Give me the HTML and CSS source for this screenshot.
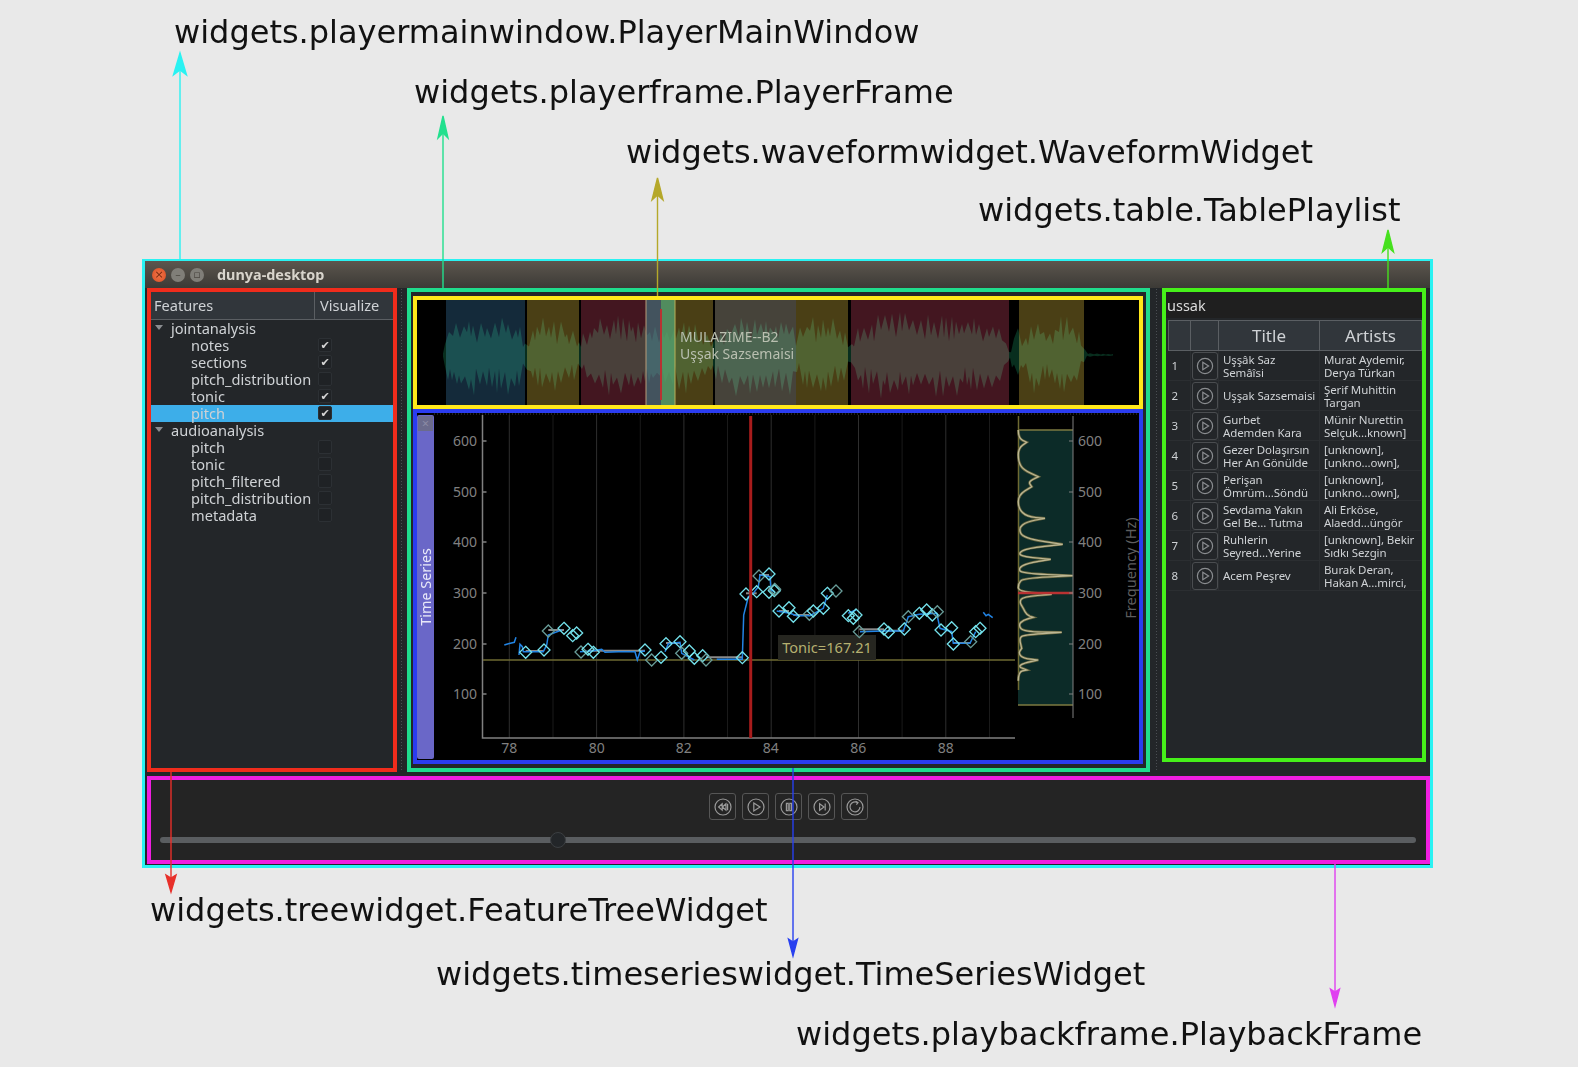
FILE: index.html
```html
<!DOCTYPE html>
<html lang="en">
<head>
  <meta charset="UTF-8">
  <title>dunya-desktop widgets</title>
  <link rel="stylesheet" href="styles.css">
</head>
<body>
  <div class="page">
    <div class="window">
      <div class="titlebar">
        <span class="wm-btn wm-close">×</span>
        <span class="wm-btn wm-min">–</span>
        <span class="wm-btn wm-max">▫</span>
        <span class="wm-title">dunya-desktop</span>
      </div>

      <div class="main">
        <section class="tree">
          <div class="tree-head">
            <div class="tree-head-name">Features</div>
            <div class="tree-head-vis">Visualize</div>
          </div>
          <div class="row parent"><span class="arrow"></span><span class="row-name">jointanalysis</span></div>
          <div class="row"><span class="row-name">notes</span><span class="check on"></span></div>
          <div class="row"><span class="row-name">sections</span><span class="check on"></span></div>
          <div class="row"><span class="row-name">pitch_distribution</span><span class="check"></span></div>
          <div class="row"><span class="row-name">tonic</span><span class="check on"></span></div>
          <div class="row selected"><span class="row-name">pitch</span><span class="check on"></span></div>
          <div class="row parent"><span class="arrow"></span><span class="row-name">audioanalysis</span></div>
          <div class="row"><span class="row-name">pitch</span><span class="check"></span></div>
          <div class="row"><span class="row-name">tonic</span><span class="check"></span></div>
          <div class="row"><span class="row-name">pitch_filtered</span><span class="check"></span></div>
          <div class="row"><span class="row-name">pitch_distribution</span><span class="check"></span></div>
          <div class="row"><span class="row-name">metadata</span><span class="check"></span></div>
        </section>

        <div class="splitter"></div>

        <section class="player">
          <div class="waveform">
            <svg class="waveform-svg" viewBox="417 300 722 105">
              <rect x="446" y="300" width="79" height="105" fill="#142a3a"/>
              <rect x="527" y="300" width="52" height="105" fill="#4a3f15"/>
              <rect x="581" y="300" width="65" height="105" fill="#431620"/>
              <rect x="675" y="300" width="38" height="105" fill="#4a3f15"/>
              <rect x="715" y="300" width="81" height="105" fill="#46433a"/>
              <rect x="796" y="300" width="52" height="105" fill="#4a3f15"/>
              <rect x="851" y="300" width="158" height="105" fill="#431620"/>
              <rect x="1019" y="300" width="65" height="105" fill="#4a3f15"/>
              <path id="wave" class="wave"/>
              <rect x="646" y="300" width="15" height="105" fill="#6f8b9c" opacity=".6"/>
              <rect x="661" y="300" width="14" height="105" fill="#5fa56f" opacity=".85"/>
              <path d="M646 300V405" stroke="#b89c78"/>
              <path d="M675 300V405" stroke="#b8b058"/>
              <rect x="660" y="309" width="2" height="91" fill="#b83232"/>
              <text class="wave-text" x="680" y="342">MULAZIME--B2</text>
              <text class="wave-text" x="680" y="359">Uşşak Sazsemaisi</text>
            </svg>
          </div>

          <div class="series">
            <div class="dock-title">
              <span class="dock-close">×</span>
              <span class="dock-label">Time Series</span>
            </div>
            <svg class="series-svg" viewBox="434 413 705 347">
              <path class="dots" d="M434 414H1139"/>
              <g id="grid"></g>
              <path class="axis" d="M482.5 415V738H1015"/>
              <path class="axis" d="M482.5 441h4M482.5 492h4M482.5 542h4M482.5 593h4M482.5 644h4M482.5 694h4"/>
              <g class="tick-y">
                <text x="477" y="446">600</text>
                <text x="477" y="497">500</text>
                <text x="477" y="547">400</text>
                <text x="477" y="598">300</text>
                <text x="477" y="649">200</text>
                <text x="477" y="699">100</text>
              </g>
              <g class="tick-x">
                <text x="509.3" y="753">78</text>
                <text x="596.7" y="753">80</text>
                <text x="683.7" y="753">82</text>
                <text x="770.7" y="753">84</text>
                <text x="858.3" y="753">86</text>
                <text x="945.7" y="753">88</text>
              </g>

              <rect x="1018" y="430" width="55" height="275" fill="#0c2b28"/>
              <path d="M1018 430H1073M1018 705H1073" stroke="#7c7a40" stroke-width="1.5"/>
              <path d="M1018.5 416V690" stroke="#6e6a32" stroke-width="1.5"/>
              <path class="distribution-edge" id="distributionEdge"/>
              <path class="distribution" id="distribution"/>
              <path d="M1018 593H1073" stroke="#b83232" stroke-width="2.5"/>
              <path d="M1073 416V718" stroke="#808080"/>
              <path d="M1069 441h4M1069 492h4M1069 542h4M1069 593h4M1069 644h4M1069 694h4" stroke="#808080"/>
              <g class="tick-r">
                <text x="1078" y="446">600</text>
                <text x="1078" y="497">500</text>
                <text x="1078" y="547">400</text>
                <text x="1078" y="598">300</text>
                <text x="1078" y="649">200</text>
                <text x="1078" y="699">100</text>
              </g>
              <text class="freq-label" transform="translate(1136 568) rotate(-90)">Frequency (Hz)</text>

              <path d="M483 660H1015" stroke="#6e6a32" stroke-width="1.5"/>
              <rect x="778" y="635" width="98" height="25" fill="#262620"/>
              <text class="tonic-text" x="827" y="653">Tonic=167.21</text>

              <g id="notes"></g>
              <rect x="749.2" y="416" width="3" height="322" fill="#a81c1c"/>
            </svg>
          </div>
        </section>

        <div class="splitter splitter-right"></div>

        <section class="playlist">
          <div class="search">ussak</div>
          <table class="tracks">
            <thead>
              <tr><th></th><th></th><th>Title</th><th>Artists</th></tr>
            </thead>
            <tbody>
              <tr><td class="num">1</td><td><span class="track-play"><svg viewBox="0 0 20 20"><circle cx="10" cy="10" r="7.6"/><path d="M7.8 6.3 13.6 10 7.8 13.7Z"/></svg></span></td><td>Uşşâk Saz<br>Semâîsi</td><td>Murat Aydemir,<br>Derya Türkan</td></tr>
              <tr><td class="num">2</td><td><span class="track-play"><svg viewBox="0 0 20 20"><circle cx="10" cy="10" r="7.6"/><path d="M7.8 6.3 13.6 10 7.8 13.7Z"/></svg></span></td><td>Uşşak Sazsemaisi</td><td>Şerif Muhittin<br>Targan</td></tr>
              <tr><td class="num">3</td><td><span class="track-play"><svg viewBox="0 0 20 20"><circle cx="10" cy="10" r="7.6"/><path d="M7.8 6.3 13.6 10 7.8 13.7Z"/></svg></span></td><td>Gurbet<br>Ademden Kara</td><td>Münir Nurettin<br>Selçuk…known]</td></tr>
              <tr><td class="num">4</td><td><span class="track-play"><svg viewBox="0 0 20 20"><circle cx="10" cy="10" r="7.6"/><path d="M7.8 6.3 13.6 10 7.8 13.7Z"/></svg></span></td><td>Gezer Dolaşırsın<br>Her An Gönülde</td><td>[unknown],<br>[unkno…own],</td></tr>
              <tr><td class="num">5</td><td><span class="track-play"><svg viewBox="0 0 20 20"><circle cx="10" cy="10" r="7.6"/><path d="M7.8 6.3 13.6 10 7.8 13.7Z"/></svg></span></td><td>Perişan<br>Ömrüm…Söndü</td><td>[unknown],<br>[unkno…own],</td></tr>
              <tr><td class="num">6</td><td><span class="track-play"><svg viewBox="0 0 20 20"><circle cx="10" cy="10" r="7.6"/><path d="M7.8 6.3 13.6 10 7.8 13.7Z"/></svg></span></td><td>Sevdama Yakın<br>Gel Be… Tutma</td><td>Ali Erköse,<br>Alaedd…üngör</td></tr>
              <tr><td class="num">7</td><td><span class="track-play"><svg viewBox="0 0 20 20"><circle cx="10" cy="10" r="7.6"/><path d="M7.8 6.3 13.6 10 7.8 13.7Z"/></svg></span></td><td>Ruhlerin<br>Seyred…Yerine</td><td>[unknown], Bekir<br>Sıdkı Sezgin</td></tr>
              <tr><td class="num">8</td><td><span class="track-play"><svg viewBox="0 0 20 20"><circle cx="10" cy="10" r="7.6"/><path d="M7.8 6.3 13.6 10 7.8 13.7Z"/></svg></span></td><td>Acem Peşrev</td><td>Burak Deran,<br>Hakan A…mirci,</td></tr>
            </tbody>
          </table>
        </section>
      </div>

      <section class="playback">
        <div class="transport">
          <button class="transport-btn"><svg viewBox="0 0 20 20"><circle cx="10" cy="10" r="8"/><path d="M9.2 6.8 5.6 10l3.6 3.2ZM13 6.8 9.4 10l3.6 3.2Z"/><path d="M14.6 6.8v6.4"/></svg></button>
          <button class="transport-btn"><svg viewBox="0 0 20 20"><circle cx="10" cy="10" r="8"/><path d="M7.8 6 14 10l-6.2 4Z"/></svg></button>
          <button class="transport-btn"><svg viewBox="0 0 20 20"><circle cx="10" cy="10" r="8"/><path d="M7.4 6.4v7.2h1.8V6.4ZM10.8 6.4v7.2h1.8V6.4Z"/></svg></button>
          <button class="transport-btn"><svg viewBox="0 0 20 20"><circle cx="10" cy="10" r="8"/><path d="M7.6 6.8 12 10l-4.4 3.2Z"/><path d="M13.2 6.4v7.2"/></svg></button>
          <button class="transport-btn"><svg viewBox="0 0 20 20"><circle cx="10" cy="10" r="8"/><path d="M12.6 5.6A5 5 0 1 0 15 10"/><path d="M10.6 4.2 13 5.6l-1.6 2"/></svg></button>
        </div>
        <div class="slider"><span class="slider-handle"></span></div>
      </section>
    </div>

    <div class="label label-main">widgets.playermainwindow.PlayerMainWindow</div>
    <div class="label label-frame">widgets.playerframe.PlayerFrame</div>
    <div class="label label-wave">widgets.waveformwidget.WaveformWidget</div>
    <div class="label label-table">widgets.table.TablePlaylist</div>
    <div class="label label-tree">widgets.treewidget.FeatureTreeWidget</div>
    <div class="label label-series">widgets.timeserieswidget.TimeSeriesWidget</div>
    <div class="label label-playback">widgets.playbackframe.PlaybackFrame</div>

    <svg class="arrows" viewBox="0 0 1578 1067">
      <g stroke="#2af2f2" fill="#2af2f2"><path d="M180 261V68"/><path d="M180 53l6.5 22-6.5-5-6.5 5Z"/></g>
      <g stroke="#22e08e" fill="#22e08e"><path d="M443 288V131"/><path d="M443 116l5 22-5-5-5 5Z"/></g>
      <g stroke="#b5a82a" fill="#b5a82a"><path d="M657.5 296V193"/><path d="M657.5 178l5.5 22-5.5-5-5.5 5Z"/></g>
      <g stroke="#46e01e" fill="#46e01e"><path d="M1388 288V245"/><path d="M1388 230l5.5 22-5.5-5-5.5 5Z"/></g>
      <g stroke="#e8302a" fill="#e8302a"><path d="M171 772V877"/><path d="M171 892l-5-17 5 3 5-3Z"/></g>
      <g stroke="#2840f0" fill="#2840f0"><path d="M793 768V941"/><path d="M793 956l-4.5-17 4.5 3 4.5-3Z"/></g>
      <g stroke="#e040f0" fill="#e040f0"><path d="M1335 864V991"/><path d="M1335 1006l-4.5-17 4.5 3 4.5-3Z"/></g>
    </svg>
  </div>

  <script src="plot.js"></script>
</body>
</html>
```

FILE: styles.css
```css
body {
  margin: 0;
  background-color: #e9e9e9;
  font-family: "Noto Sans", sans-serif;
}

.page {
  position: relative;
  width: 1578px;
  height: 1067px;
  padding: 259px 0 0 142px;
  box-sizing: border-box;
  overflow: hidden;
}

/* annotation labels and arrows sit on the free canvas around the window */
.label {
  position: absolute;
  font-family: "DejaVu Sans", sans-serif;
  font-size: 32px;
  line-height: 38px;
  color: #111;
  white-space: nowrap;
}

.label-main { left: 174px; top: 13px; }
.label-frame { left: 414px; top: 73px; }
.label-wave { left: 626px; top: 133px; }
.label-table { left: 978px; top: 191px; }
.label-tree { left: 150px; top: 891px; }
.label-series { left: 436px; top: 955px; }
.label-playback { left: 796px; top: 1015px; }

.arrows {
  position: absolute;
  left: 0;
  top: 0;
  width: 1578px;
  height: 1067px;
  pointer-events: none;
}

.arrows path {
  stroke-width: 1.4;
}

.window {
  width: 1291px;
  height: 609px;
  box-sizing: border-box;
  border: 3px solid #2af2f2;
  border-top-width: 2px;
  background-color: #232629;
  display: flex;
  flex-direction: column;
}

.titlebar {
  height: 27px;
  display: flex;
  align-items: center;
  padding-left: 7px;
  gap: 5px;
  background: linear-gradient(#5c564e, #3c3a36);
}

.wm-btn {
  width: 14px;
  height: 14px;
  border-radius: 50%;
  font-size: 11px;
  line-height: 14px;
  text-align: center;
  color: #4a4640;
  background-color: #807e78;
  font-family: "DejaVu Sans", sans-serif;
}

.wm-close {
  color: #7a2a10;
  background: radial-gradient(#f0764a, #dc4c22);
}

.wm-title {
  margin-left: 8px;
  font-size: 14.4px;
  font-weight: 700;
  color: #d8d4cc;
}

.main {
  display: flex;
  height: 484px;
  padding-left: 2px;
}

.tree {
  width: 250px;
  box-sizing: border-box;
  border: 4px solid #f02c1c;
  background-color: #232629;
  color: #cfd2d5;
  font-size: 14.6px;
}

.tree-head {
  display: flex;
  height: 28px;
  box-sizing: border-box;
  background-color: #31363b;
  border-bottom: 1px solid #5b5f63;
  line-height: 27px;
}

.tree-head-name {
  width: 164px;
  padding-left: 3px;
  box-sizing: border-box;
  border-right: 1px solid #5b5f63;
}

.tree-head-vis {
  padding-left: 5px;
}

.row {
  display: flex;
  align-items: center;
  height: 17px;
  padding-left: 40px;
  position: relative;
  line-height: 17px;
}

.row.parent {
  padding-left: 20px;
}

.row.selected {
  background-color: #3daee9;
}

.arrow {
  position: absolute;
  left: 4px;
  top: 5px;
  border: 4px solid transparent;
  border-top: 5px solid #8a8d90;
  border-bottom: 0;
}

.check {
  position: absolute;
  left: 167px;
  top: 1px;
  width: 14px;
  height: 14px;
  box-sizing: border-box;
  border: 1px solid #2c3034;
  border-radius: 2px;
  background-color: #1f2225;
  font-size: 11px;
  line-height: 12px;
  text-align: center;
  color: #d4d4d4;
}

.check.on::after {
  content: "\2714";
  font-family: "DejaVu Sans", sans-serif;
}

.splitter {
  width: 10px;
  background-image: radial-gradient(#4a4e52 1px, transparent 1px);
  background-size: 3px 3px;
  background-position: 3px 0;
  background-repeat: repeat-y;
}

.splitter-right {
  width: 12px;
  background-position: 5px 0;
}

.player {
  width: 743px;
  box-sizing: border-box;
  border: 4px solid #1fdc8c;
  padding: 4px 3px 4px 2px;
  display: flex;
  flex-direction: column;
}

.waveform {
  height: 113px;
  box-sizing: border-box;
  border: 4px solid #ffe81a;
  background-color: #000;
}

.waveform-svg,
.series-svg {
  display: block;
  width: 100%;
  height: 100%;
}

.wave {
  fill: #082e1e;
  mix-blend-mode: screen;
}

.wave-text {
  font-size: 14px;
  fill: #b9bfb0;
}

.series {
  flex: 1;
  min-height: 0;
  box-sizing: border-box;
  border: 4px solid #2a3cf0;
  background-color: #000;
  display: flex;
}

.dock-title {
  width: 17px;
  margin: 2px 0 1px;
  flex: none;
  background-color: #6a67c8;
  border-radius: 2px;
  display: flex;
  flex-direction: column;
  align-items: center;
  color: #e8e8f8;
}

.dock-close {
  width: 15px;
  height: 15px;
  margin-top: 1px;
  background-color: #6b6b8c;
  color: #8a8aa4;
  font-size: 13px;
  line-height: 15px;
  text-align: center;
}

.dock-label {
  margin-top: 117px;
  writing-mode: vertical-rl;
  transform: rotate(180deg);
  font-size: 14.4px;
  line-height: 17px;
}

.series-svg {
  flex: 1;
  min-width: 0;
  width: auto;
}

.dots {
  stroke: #444;
  stroke-dasharray: 1 2;
}

.axis {
  fill: none;
  stroke: #808080;
  stroke-width: 1.5;
}

.tick-y text,
.tick-x text,
.tick-r text {
  font-size: 14px;
  fill: #808080;
}

.tick-y text { text-anchor: end; }
.tick-x text { text-anchor: middle; }

.freq-label {
  font-size: 14.6px;
  fill: #5e5e5e;
  text-anchor: middle;
}

.tonic-text {
  font-size: 14.6px;
  fill: #b5b070;
  text-anchor: middle;
}

.distribution-edge {
  fill: none;
  stroke: #6a6840;
  stroke-width: 2.6;
}

.distribution {
  fill: none;
  stroke: #bdb794;
  stroke-width: 1.2;
}

.playlist {
  width: 264px;
  box-sizing: border-box;
  height: 474px;
  border: 4px solid #46f01a;
  color: #cfd2d5;
  font-size: 11.5px;
  letter-spacing: -0.1px;
}

.search {
  height: 26px;
  padding-left: 1px;
  background-color: #1f1f1f;
  color: #dcdcdc;
  font-size: 14.5px;
  letter-spacing: 0;
  line-height: 26px;
}

.tracks {
  width: 254px;
  margin: 2px 0 0 2px;
  table-layout: fixed;
  border-collapse: collapse;
}

.tracks th {
  height: 30px;
  padding: 0;
  box-sizing: border-box;
  background-color: #31363b;
  border: 1px solid #5b5f63;
  font-size: 17px;
  font-weight: 400;
  letter-spacing: 0;
}

.tracks th:nth-child(1) { width: 22px; }
.tracks th:nth-child(2) { width: 28px; }
.tracks th:nth-child(3) { width: 101px; }

.tracks td {
  height: 30px;
  padding: 0 0 0 4px;
  border-bottom: 1px solid #2b2e31;
  border-right: 1px solid #2b2e31;
  line-height: 13px;
  white-space: nowrap;
  box-sizing: border-box;
}

.tracks td.num {
  padding-left: 3px;
}

.tracks td:nth-child(2) {
  padding: 0 0 0 1px;
}

.track-play {
  display: block;
  width: 26px;
  height: 28px;
  box-sizing: border-box;
  border: 1px solid #4a4d50;
  border-radius: 3px;
}

.track-play svg {
  display: block;
  width: 20px;
  height: 20px;
  margin: 3px 2px;
  fill: none;
  stroke: #8a8d90;
  stroke-width: 1.2;
}

.playback {
  margin: 4px 0 0 2px;
  height: 88px;
  box-sizing: border-box;
  border: 4px solid #f01ee0;
  background-color: #242424;
  display: flex;
  flex-direction: column;
  align-items: center;
}

.transport {
  display: flex;
  gap: 6px;
  margin-top: 13px;
}

.transport-btn {
  width: 27px;
  height: 27px;
  padding: 0;
  background: none;
  border: 1px solid #565656;
  border-radius: 3px;
}

.transport-btn svg {
  display: block;
  width: 20px;
  height: 20px;
  margin: 0 auto;
  fill: none;
  stroke: #9a9a9a;
  stroke-width: 1.2;
}

.slider {
  position: relative;
  align-self: flex-start;
  width: 1256px;
  height: 6px;
  margin: 17px 0 0 9px;
  border-radius: 3px;
  background-color: #5a5d60;
}

.slider-handle {
  position: absolute;
  left: 390px;
  top: -5px;
  width: 16px;
  height: 16px;
  box-sizing: border-box;
  border-radius: 50%;
  border: 1px solid #3c3f42;
  background-color: #232629;
}

.grid-major { stroke: #2e2e2e; }
.grid-minor { stroke: #1a1a1a; }

.note-bar {
  stroke: #8a8a8a;
  stroke-width: 2;
}

.pitch-line {
  fill: none;
  stroke: #2284e4;
  stroke-width: 1.5;
}

.diamond {
  fill: none;
  stroke: #74e2ec;
  stroke-width: 1.3;
}

.diamond.dim {
  stroke: #689c98;
}
```

FILE: plot.js
```js
// waveform, note contour and pitch distribution for the two plots
const svgNS = "http://www.w3.org/2000/svg";

function add(parent, tag, attrs) {
  const el = document.createElementNS(svgNS, tag);
  for (const key in attrs) el.setAttribute(key, attrs[key]);
  parent.appendChild(el);
  return el;
}

// seeded so every load draws the same picture
let seed = 17;
function rand() {
  seed = (seed * 16807) % 2147483647;
  return seed / 2147483647;
}

const envelope = [
  [443, 2], [446, 30], [452, 36], [470, 42], [490, 38], [510, 42], [522, 30], [526, 12],
  [530, 30], [545, 42], [560, 34], [575, 25], [580, 10], [585, 30], [600, 42], [625, 44],
  [645, 35], [660, 30], [675, 35], [690, 42], [712, 15], [716, 25], [735, 42], [760, 38],
  [790, 42], [796, 22], [810, 42], [830, 40], [846, 25], [850, 5], [856, 34], [880, 44],
  [950, 42], [1000, 36], [1007, 8], [1011, 4], [1014, 30], [1018, 28], [1024, 12], [1035, 42],
  [1050, 25], [1060, 44], [1075, 36], [1084, 10], [1086, 2], [1113, 1]
];

function ampAt(x) {
  for (let i = 1; i < envelope.length; i++) {
    const [x0, a0] = envelope[i - 1];
    const [x1, a1] = envelope[i];
    if (x <= x1) return a0 + (a1 - a0) * (x - x0) / (x1 - x0);
  }
  return 0;
}

// tall narrow spikes with valleys between them, top and bottom drawn separately
function spikes(x0, x1) {
  const pts = [];
  let x = x0;
  let high = true;
  while (x <= x1) {
    const level = high ? 0.68 + 0.32 * rand() : 0.3 + 0.28 * rand();
    pts.push([x, level * ampAt(x)]);
    x += 2 + Math.floor(rand() * 3);
    high = !high;
  }
  return pts;
}

function drawWave() {
  const midY = 355;
  const top = spikes(443, 1113).map((p) => `${p[0]} ${(midY - p[1]).toFixed(1)}`);
  const bottom = spikes(443, 1113).map((p) => `${p[0]} ${(midY + p[1]).toFixed(1)}`);
  document.getElementById("wave").setAttribute("d", "M" + top.join("L") + "L" + bottom.reverse().join("L") + "Z");
}

function drawGrid() {
  const grid = document.getElementById("grid");
  for (let t = 78; t <= 89; t++) {
    const x = (509.3 + (t - 78) * 43.65).toFixed(1);
    add(grid, "path", { d: `M${x} 415V738`, class: t % 2 ? "grid-minor" : "grid-major" });
  }
}

// points in the left and right halves of the plot, in 3x units from their origin
const left = (p) => [405 + p[0] / 3, 405 + p[1] / 3];
const right = (p) => [770 + p[0] / 3, 405 + p[1] / 3];
const line = (pts) => "M" + pts.map((p) => p[0].toFixed(1) + " " + p[1].toFixed(1)).join("L");

// rounds the corners through segment midpoints; a doubled point stays a sharp tip
function smooth(pts) {
  let d = `M${pts[0][0].toFixed(1)} ${pts[0][1].toFixed(1)}`;
  for (let i = 1; i < pts.length - 1; i++) {
    const mx = (pts[i][0] + pts[i + 1][0]) / 2;
    const my = (pts[i][1] + pts[i + 1][1]) / 2;
    d += `Q${pts[i][0].toFixed(1)} ${pts[i][1].toFixed(1)} ${mx.toFixed(1)} ${my.toFixed(1)}`;
  }
  return d;
}

function sharpenPeaks(pts) {
  const out = [];
  pts.forEach((p, i) => {
    out.push(p);
    const prev = pts[i - 1];
    const next = pts[i + 1];
    if (prev && next && p[0] > prev[0] && p[0] > next[0]) out.push(p);
  });
  return out;
}

const pitchSegments = [
  [[298, 720], [310, 716], [328, 712], [333, 697]].map(left),
  [[342, 750], [345, 718], [352, 725], [355, 740], [415, 740], [425, 720], [430, 690], [470, 675]].map(left),
  [[525, 740], [560, 738], [590, 733], [600, 742], [640, 740], [690, 740], [697, 765], [705, 740], [720, 738]].map(left),
  [[780, 740], [790, 716], [825, 712], [830, 745], [868, 765]].map(left),
  [[935, 763], [1012, 763], [1016, 630], [1030, 575], [1045, 565], [1060, 545], [1065, 510], [1095, 515], [1098, 555], [1108, 560]].map(left),
  [[20, 618], [60, 625], [80, 632], [120, 632], [160, 610], [172, 570]].map(right),
  [[235, 625], [258, 615]].map(right),
  [[270, 680], [340, 678], [400, 678], [415, 635], [448, 628], [500, 625], [510, 670], [545, 680], [550, 715], [600, 715], [617, 680]].map(right),
  [[640, 622], [648, 632], [655, 628], [668, 638]].map(right)
];

const noteBars = [
  [[362, 738], [417, 738]], [[430, 675], [477, 675]], [[549, 737], [720, 737]],
  [[783, 714], [825, 714]], [[903, 757], [1012, 757]], [[1023, 565], [1055, 565]], [[1062, 510], [1092, 510]]
].map((b) => b.map(left)).concat([
  [[27, 618], [57, 618]], [[70, 630], [118, 630]], [[268, 673], [342, 673]], [[355, 677], [403, 677]],
  [[550, 714], [602, 714]]
].map((b) => b.map(right)));

const diamonds = [
  [362, 742], [417, 735], [430, 678], [477, 670], [503, 692], [515, 684], [528, 741], [549, 733],
  [565, 742], [720, 735], [740, 765], [768, 757], [783, 716], [825, 710], [830, 745], [853, 738],
  [868, 760], [893, 752], [903, 765], [1012, 758], [1023, 567], [1055, 560], [1062, 513], [1092, 507],
  [1092, 562], [1108, 557]
].map(left).concat([
  [14, 553], [27, 618], [57, 608], [70, 634], [118, 628], [130, 618], [160, 610], [172, 565],
  [198, 558], [235, 632], [250, 640], [258, 630], [268, 680], [342, 672], [355, 682], [403, 672],
  [415, 635], [448, 625], [470, 615], [487, 630], [502, 620], [513, 675], [545, 668], [550, 717],
  [602, 710], [617, 680], [630, 670]
].map(right));

function drawNotes() {
  const notes = document.getElementById("notes");
  noteBars.forEach((b) => add(notes, "path", { d: line(b), class: "note-bar" }));
  pitchSegments.forEach((s) => add(notes, "path", { d: line(s), class: "pitch-line" }));
  diamonds.forEach((p, i) => {
    const r = 6;
    const [x, y] = p;
    add(notes, "path", {
      d: `M${x} ${y - r}L${x + r} ${y}L${x} ${y + r}L${x - r} ${y}Z`,
      class: i % 4 === 2 ? "diamond dim" : "diamond"
    });
  });
}

const distribution = [
  [745, 75], [745, 100], [770, 112], [745, 130], [745, 170], [760, 195], [805, 215], [775, 230],
  [785, 245], [745, 270], [745, 310], [770, 335], [825, 340], [770, 350], [745, 370], [760, 400],
  [878, 418], [770, 430], [745, 445], [760, 455], [842, 463], [770, 475], [745, 490], [755, 505],
  [908, 512], [760, 520], [745, 535], [745, 560], [845, 568], [760, 575], [748, 590], [760, 610],
  [770, 630], [790, 637], [760, 645], [745, 660], [760, 680], [875, 682], [760, 690], [748, 700],
  [755, 730], [745, 745], [760, 760], [805, 765], [760, 775], [745, 785], [770, 795], [745, 800],
  [745, 855]
].map(right);

drawWave();
drawGrid();
drawNotes();
const distributionPath = smooth(sharpenPeaks(distribution));
document.getElementById("distribution").setAttribute("d", distributionPath);
document.getElementById("distributionEdge").setAttribute("d", distributionPath);
```
